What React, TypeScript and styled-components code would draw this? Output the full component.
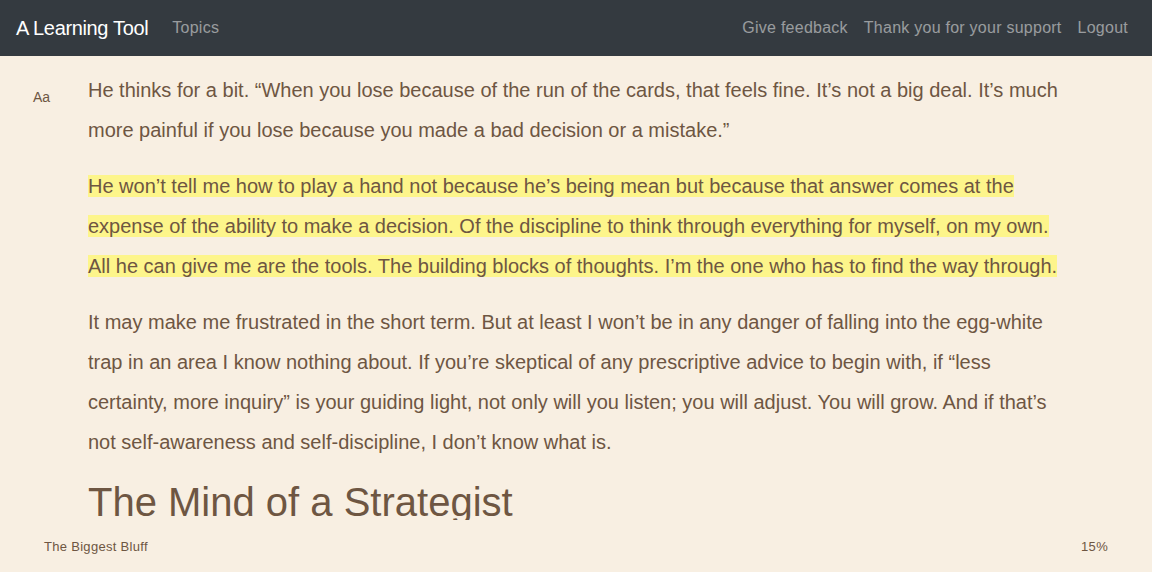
import React from "react";
import styled, { createGlobalStyle } from "styled-components";

const Global = createGlobalStyle`
  html, body { margin: 0; padding: 0; }
  body {
    background: #f8efe2;
    font-family: "Liberation Sans", Arial, sans-serif;
    color: #6e5642;
  }
`;

const Page = styled.div`
  height: 100vh;
  display: flex;
  flex-direction: column;
  overflow: hidden;
`;

const NavBar = styled.nav`
  height: 56px;
  flex: none;
  box-sizing: border-box;
  background: #343a40;
  display: flex;
  align-items: center;
  padding: 0 16px;
`;

const Brand = styled.a`
  color: #fff;
  font-size: 20px;
  margin-right: 16px;
  text-decoration: none;
  letter-spacing: -0.35px;
`;

const NavLink = styled.a`
  color: rgba(255, 255, 255, 0.5);
  font-size: 16px;
  padding: 0 8px;
  text-decoration: none;
  letter-spacing: 0.25px;
`;

const Spacer = styled.div`
  flex: 1;
`;

const Main = styled.main`
  flex: 1;
  min-height: 0;
  overflow: hidden;
  display: flex;
  padding-top: 14px;
`;

const Side = styled.div`
  width: 88px;
  flex: none;
  box-sizing: border-box;
  padding-left: 33px;
  padding-top: 19px;
  font-size: 14px;
`;

const Article = styled.article`
  width: 984px;
  font-size: 20px;
  line-height: 40px;
`;

const Para = styled.p`
  margin: 0 0 16px;
`;

const Mark = styled.span`
  background: #fdf58b;
`;

const Heading = styled.h1`
  font-size: 40px;
  font-weight: 400;
  line-height: 48px;
  margin: 14px 0 0;
`;

const Footer = styled.footer`
  flex: none;
  height: 52px;
  display: flex;
  align-items: center;
  justify-content: space-between;
  padding: 0 44px 0 44px;
  font-size: 13px;
  letter-spacing: 0.3px;
  box-sizing: border-box;
`;

export default function App() {
  return (
    <>
      <Global />
      <Page>
        <NavBar>
          <Brand>A Learning Tool</Brand>
          <NavLink>Topics</NavLink>
          <Spacer />
          <NavLink>Give feedback</NavLink>
          <NavLink>Thank you for your support</NavLink>
          <NavLink>Logout</NavLink>
        </NavBar>
        <Main>
          <Side>Aa</Side>
          <Article>
            <Para>
              He thinks for a bit. “When you lose because of the run of the cards, that feels fine. It’s not a big deal. It’s much more painful if you lose because you made a bad decision or a mistake.”
            </Para>
            <Para>
              <Mark>
                He won’t tell me how to play a hand not because he’s being mean but because that answer comes at the expense of the ability to make a decision. Of the discipline to think through everything for myself, on my own. All he can give me are the tools. The building blocks of thoughts. I’m the one who has to find the way through.
              </Mark>
            </Para>
            <Para>
              It may make me frustrated in the short term. But at least I won’t be in any danger of falling into the egg-white trap in an area I know nothing about. If you’re skeptical of any prescriptive advice to begin with, if “less certainty, more inquiry” is your guiding light, not only will you listen; you will adjust. You will grow. And if that’s not self-awareness and self-discipline, I don’t know what is.
            </Para>
            <Heading>The Mind of a Strategist</Heading>
          </Article>
        </Main>
        <Footer>
          <span>The Biggest Bluff</span>
          <span>15%</span>
        </Footer>
      </Page>
    </>
  );
}
